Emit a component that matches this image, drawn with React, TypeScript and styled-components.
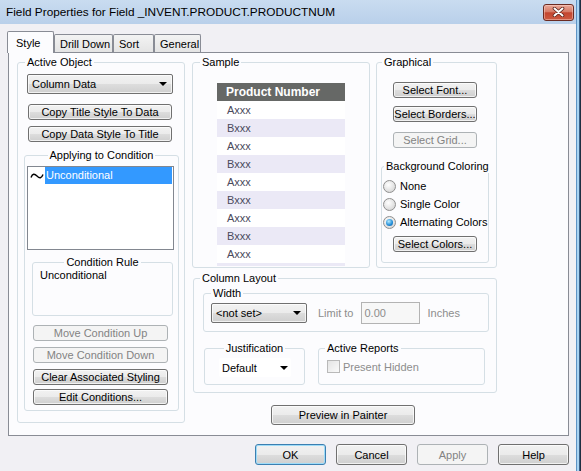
import React from "react";
import styled, { createGlobalStyle, css } from "styled-components";

const GlobalStyle = createGlobalStyle`
  html, body {
    margin: 0;
    padding: 0;
    background: #f1f0f4;
  }
  body {
    font-family: "Liberation Sans", Arial, sans-serif;
    font-size: 11px;
    color: #000;
  }
`;

type Offset = { $mt?: number; $ml?: number };

const offset = css<Offset>`
  margin-top: ${(p) => p.$mt ?? 0}px;
  margin-left: ${(p) => p.$ml ?? 0}px;
`;

const Window = styled.div`
  display: flex;
  width: 581px;
  height: 471px;
  overflow: hidden;
`;

const Main = styled.div`
  flex: 1;
  display: flex;
  flex-direction: column;
  background: #f1f0f4;
`;

const Frame = styled.div`
  width: 5px;
  background: linear-gradient(
    to right,
    #5e93c4 0 1px,
    #a9d3f2 1px 3px,
    #3a5f86 3px 4px,
    #1f2f42 4px
  );
`;

const TitleBar = styled.div`
  height: 24px;
  flex-shrink: 0;
  display: flex;
  align-items: center;
  padding: 0 2px 0 6px;
  background: linear-gradient(#c9dcf0, #b9d0ea);
`;

const Title = styled.span`
  flex: 1;
  font-size: 11.8px;
  white-space: nowrap;
`;

const CloseButton = styled.div`
  box-sizing: border-box;
  width: 31px;
  height: 17px;
  border: 1px solid #6b2b22;
  border-radius: 3px;
  background: linear-gradient(#eaa898 0%, #d67b67 45%, #c3452f 52%, #cd5a41 100%);
  box-shadow: inset 0 0 0 1px rgba(255, 220, 210, 0.45);
  display: flex;
  align-items: center;
  justify-content: center;
`;

const Body = styled.div`
  flex: 1;
  display: flex;
  flex-direction: column;
  padding: 7px 7px 0 8px;
`;

const TabStrip = styled.div`
  display: flex;
  align-items: flex-end;
  height: 21px;
  margin-left: -1px;
`;

const Tab = styled.div<{ $active?: boolean; $w: number }>`
  box-sizing: border-box;
  width: ${(p) => p.$w}px;
  height: ${(p) => (p.$active ? 22 : 18)}px;
  margin-bottom: ${(p) => (p.$active ? -1 : 0)}px;
  padding-left: ${(p) => (p.$active ? 8 : 5)}px;
  border: 1px solid #898c95;
  border-bottom: none;
  border-radius: 2px 2px 0 0;
  display: flex;
  align-items: center;
  background: ${(p) => (p.$active ? "#fcfcfe" : "linear-gradient(#f3f3f3, #e4e4e4)")};
  position: relative;
  z-index: ${(p) => (p.$active ? 2 : 0)};
`;

const Panel = styled.div`
  box-sizing: border-box;
  width: 561px;
  height: 384px;
  border: 1px solid #898c95;
  background: #fcfcfe;
  padding: 9px 0 0 8px;
  display: grid;
  grid-template-columns: 168px 305px;
  column-gap: 7px;
  align-items: start;
`;

const Column = styled.div`
  display: flex;
  flex-direction: column;
  align-items: flex-start;
`;

const Row = styled.div<Offset & { $gap?: number }>`
  ${offset};
  display: flex;
  align-items: flex-start;
  gap: ${(p) => p.$gap ?? 0}px;
`;

const Group = styled.div<Offset & { $w: number; $h: number }>`
  ${offset};
  box-sizing: border-box;
  width: ${(p) => p.$w}px;
  height: ${(p) => p.$h}px;
  flex-shrink: 0;
  border: 1px solid #d5dfe5;
  border-radius: 3px;
  display: flex;
  flex-direction: column;
  align-items: flex-start;
`;

const Legend = styled.span<{ $center?: boolean; $ml?: number }>`
  align-self: ${(p) => (p.$center ? "center" : "flex-start")};
  margin: -7px 0 0 ${(p) => (p.$center ? 0 : p.$ml ?? 7)}px;
  padding: 0 2px;
  line-height: 13px;
  background: #fcfcfe;
  white-space: nowrap;
`;

const Button = styled.button<Offset & { $w: number; $h: number; $default?: boolean }>`
  ${offset};
  box-sizing: border-box;
  flex-shrink: 0;
  width: ${(p) => p.$w}px;
  height: ${(p) => p.$h}px;
  padding: 0;
  font-family: "Liberation Sans", Arial, sans-serif;
  font-size: 11px;
  color: #000;
  border: 1px solid ${(p) => (p.$default ? "#3c7fb1" : "#707070")};
  border-radius: 3px;
  background: linear-gradient(#f2f2f2 0%, #ebebeb 50%, #dddddd 51%, #cfcfcf 100%);
  box-shadow: inset 0 0 0 1px ${(p) => (p.$default ? "#9fdcf8" : "rgba(255, 255, 255, 0.7)")};
  white-space: nowrap;

  &:disabled {
    border-color: #adb2b5;
    background: #f4f4f4;
    color: #838383;
    box-shadow: none;
  }
`;

const Combo = styled.div<Offset & { $w: number; $h: number; $flat?: boolean }>`
  ${offset};
  box-sizing: border-box;
  width: ${(p) => p.$w}px;
  height: ${(p) => p.$h}px;
  flex-shrink: 0;
  display: flex;
  align-items: center;
  justify-content: space-between;
  padding: ${(p) => (p.$flat ? "0 3px 0 3px" : "0 5px 0 4px")};
  border: ${(p) => (p.$flat ? "none" : "1px solid #707070")};
  border-radius: 2px;
  background: ${(p) =>
    p.$flat ? "#ffffff" : "linear-gradient(#f2f2f2 0%, #ebebeb 50%, #dddddd 51%, #cfcfcf 100%)"};
  box-shadow: ${(p) => (p.$flat ? "none" : "inset 0 0 0 1px rgba(255, 255, 255, 0.7)")};
  white-space: nowrap;
`;

const Arrow = styled.span`
  width: 0;
  height: 0;
  border-left: 4px solid transparent;
  border-right: 4px solid transparent;
  border-top: 4px solid #000;
`;

const ListBox = styled.div`
  box-sizing: border-box;
  width: 147px;
  height: 84px;
  margin: 4px 0 0 2px;
  border: 1px solid #828790;
  background: #fff;
  padding-right: 1px;
`;

const ListRow = styled.div`
  display: flex;
  align-items: center;
  height: 17px;
`;

const CondIcon = styled.span`
  width: 17px;
  display: flex;
  justify-content: center;
`;

const SelectedItem = styled.span`
  flex: 1;
  height: 17px;
  line-height: 17px;
  padding-left: 1px;
  background: #3399ff;
  color: #fff;
`;

const RuleText = styled.span`
  margin-left: 7px;
  line-height: 13px;
`;

const SampleTable = styled.div`
  width: 128px;
  height: 183px;
  margin: 14px 0 0 24px;
  overflow: hidden;
`;

const HeaderCell = styled.div`
  height: 18px;
  line-height: 18px;
  padding-left: 9px;
  background: #666866;
  color: #fff;
  font-weight: bold;
  font-size: 12px;
`;

const DataRow = styled.div<{ $alt: boolean }>`
  height: 18px;
  line-height: 18px;
  padding-left: 10px;
  color: #4a4a5c;
  background: ${(p) => (p.$alt ? "#ebe9f6" : "#ffffff")};
`;

const RadioRow = styled.label<Offset>`
  ${offset};
  display: flex;
  align-items: center;
  gap: 4px;
  height: 18px;
  margin-left: 1px;
`;

const RadioDot = styled.span<{ $checked?: boolean }>`
  box-sizing: border-box;
  width: 13px;
  height: 13px;
  border-radius: 50%;
  border: 1px solid #8f8f8f;
  background: radial-gradient(circle at 40% 35%, #ffffff, #dcdcdc 70%, #c9c9c9);
  display: flex;
  align-items: center;
  justify-content: center;

  &::after {
    content: "";
    display: ${(p) => (p.$checked ? "block" : "none")};
    width: 7px;
    height: 7px;
    border-radius: 50%;
    background: radial-gradient(circle at 40% 35%, #b5ebff, #1e8ad6 60%, #0d5699);
  }
`;

const FieldRow = styled.div<Offset>`
  ${offset};
  display: flex;
  align-items: center;
  height: 22px;
`;

const DimText = styled.span<Offset>`
  ${offset};
  color: #8d8d8d;
  white-space: nowrap;
`;

const TextBox = styled.div<Offset>`
  ${offset};
  box-sizing: border-box;
  width: 59px;
  height: 22px;
  padding-left: 2px;
  border: 1px solid #b3b3b3;
  background: #f7f7f7;
  color: #8d8d8d;
  display: flex;
  align-items: center;
`;

const CheckRow = styled.div<Offset>`
  ${offset};
  display: flex;
  align-items: center;
  gap: 3px;
`;

const CheckBox = styled.span`
  box-sizing: border-box;
  width: 13px;
  height: 13px;
  border: 1px solid #b9b9b9;
  background: linear-gradient(135deg, #e4e4e4, #fafafa);
`;

const Footer = styled.div`
  display: flex;
  justify-content: flex-end;
  gap: 10px;
  margin-top: 8px;
`;

const TildeIcon = () => (
  <svg width="14" height="8" viewBox="0 0 14 8">
    <path d="M1 5.5 C2.5 1.5 4.5 1.5 7 4 S11.5 6.5 13 2.5" stroke="#000" strokeWidth="1.4" fill="none" />
  </svg>
);

const CloseIcon = () => (
  <svg width="13" height="10" viewBox="0 0 13 10">
    <path d="M2.5 1.5 L10.5 8.5 M10.5 1.5 L2.5 8.5" stroke="#5a2219" strokeWidth="3.6" strokeLinecap="round" />
    <path d="M2.5 1.5 L10.5 8.5 M10.5 1.5 L2.5 8.5" stroke="#ffffff" strokeWidth="2" strokeLinecap="round" />
  </svg>
);

// nine full sample rows, then the start of a tenth that the group clips
const sampleRows = ["Axxx", "Bxxx", "Axxx", "Bxxx", "Axxx", "Bxxx", "Axxx", "Bxxx", "Axxx", ""];

const App = () => {
  return (
    <>
      <GlobalStyle />
      <Window>
        <Main>
          <TitleBar>
            <Title>Field Properties for Field _INVENT.PRODUCT.PRODUCTNUM</Title>
            <CloseButton>
              <CloseIcon />
            </CloseButton>
          </TitleBar>
          <Body>
            <TabStrip>
              <Tab $active $w={47}>Style</Tab>
              <Tab $w={59}>Drill Down</Tab>
              <Tab $w={41}>Sort</Tab>
              <Tab $w={47}>General</Tab>
            </TabStrip>
            <Panel>
              <Column>
                <Group $w={168} $h={361}>
                  <Legend $ml={7}>Active Object</Legend>
                  <Combo $w={146} $h={20} $mt={5} $ml={9}>
                    Column Data
                    <Arrow />
                  </Combo>
                  <Button $w={144} $h={16} $mt={10} $ml={10}>Copy Title Style To Data</Button>
                  <Button $w={144} $h={16} $mt={6} $ml={10}>Copy Data Style To Title</Button>
                  <Group $w={155} $h={256} $mt={13} $ml={6}>
                    <Legend $center>Applying to Condition</Legend>
                    <ListBox>
                      <ListRow>
                        <CondIcon>
                          <TildeIcon />
                        </CondIcon>
                        <SelectedItem>Unconditional</SelectedItem>
                      </ListRow>
                    </ListBox>
                    <Group $w={141} $h={54} $mt={12} $ml={7}>
                      <Legend $center>Condition Rule</Legend>
                      <RuleText>Unconditional</RuleText>
                    </Group>
                    <Button $w={135} $h={16} $mt={9} $ml={8} disabled>Move Condition Up</Button>
                    <Button $w={135} $h={16} $mt={6} $ml={8} disabled>Move Condition Down</Button>
                    <Button $w={135} $h={16} $mt={6} $ml={8}>Clear Associated Styling</Button>
                    <Button $w={135} $h={16} $mt={4} $ml={8}>Edit Conditions...</Button>
                  </Group>
                </Group>
              </Column>

              <Column>
                <Row $gap={6}>
                  <Group $w={178} $h={206}>
                    <Legend $ml={7}>Sample</Legend>
                    <SampleTable>
                      <HeaderCell>Product Number</HeaderCell>
                      {sampleRows.map((label, i) => (
                        <DataRow key={i} $alt={i % 2 === 1}>{label}</DataRow>
                      ))}
                    </SampleTable>
                  </Group>
                  <Group $w={121} $h={206}>
                    <Legend $ml={5}>Graphical</Legend>
                    <Button $w={84} $h={16} $mt={13} $ml={16}>Select Font...</Button>
                    <Button $w={84} $h={16} $mt={8} $ml={16}>Select Borders...</Button>
                    <Button $w={84} $h={16} $mt={10} $ml={16} disabled>Select Grid...</Button>
                    <Group $w={108} $h={97} $mt={18} $ml={4}>
                      <Legend $ml={2}>Background Coloring</Legend>
                      <RadioRow $mt={4}>
                        <RadioDot />
                        None
                      </RadioRow>
                      <RadioRow>
                        <RadioDot />
                        Single Color
                      </RadioRow>
                      <RadioRow>
                        <RadioDot $checked />
                        Alternating Colors
                      </RadioRow>
                      <Button $w={84} $h={16} $mt={5} $ml={11}>Select Colors...</Button>
                    </Group>
                  </Group>
                </Row>

                <Group $w={304} $h={115} $mt={10} $ml={1}>
                  <Legend $ml={6}>Column Layout</Legend>
                  <Group $w={286} $h={39} $mt={8} $ml={9}>
                    <Legend $ml={7}>Width</Legend>
                    <FieldRow $mt={2} $ml={7}>
                      <Combo $w={96} $h={20}>
                        &lt;not set&gt;
                        <Arrow />
                      </Combo>
                      <DimText $ml={11}>Limit to</DimText>
                      <TextBox $ml={8}>0.00</TextBox>
                      <DimText $ml={7}>Inches</DimText>
                    </FieldRow>
                  </Group>
                  <Row $mt={16} $ml={10} $gap={13}>
                    <Group $w={101} $h={37}>
                      <Legend $center>Justification</Legend>
                      <Combo $flat $w={72} $h={19} $mt={3} $ml={14}>
                        Default
                        <Arrow />
                      </Combo>
                    </Group>
                    <Group $w={167} $h={37}>
                      <Legend $ml={6}>Active Reports</Legend>
                      <CheckRow $mt={5} $ml={8}>
                        <CheckBox />
                        <DimText>Present Hidden</DimText>
                      </CheckRow>
                    </Group>
                  </Row>
                </Group>

                <Button $w={144} $h={20} $mt={12} $ml={79}>Preview in Painter</Button>
              </Column>
            </Panel>
            <Footer>
              <Button $w={71} $h={21} $default>OK</Button>
              <Button $w={71} $h={21}>Cancel</Button>
              <Button $w={71} $h={21} disabled>Apply</Button>
              <Button $w={71} $h={21}>Help</Button>
            </Footer>
          </Body>
        </Main>
        <Frame />
      </Window>
    </>
  );
};

export default App;
